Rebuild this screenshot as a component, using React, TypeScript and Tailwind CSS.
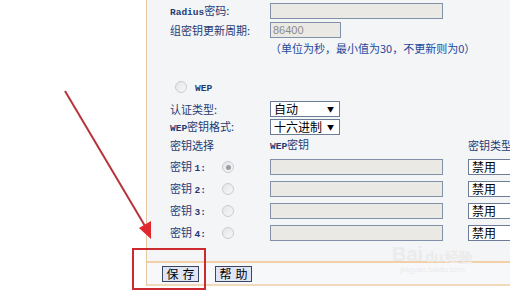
import React from 'react';

const LABEL = 'text-[11px] leading-none text-[#1f3b74]';
const FONT = { fontFamily: '"Noto Sans CJK SC", "Liberation Sans", sans-serif' };

function Latin({ children }: { children: React.ReactNode }) {
  return <span className="font-['Liberation_Mono'] text-[9.5px] font-bold">{children}</span>;
}

function Radio({ checked = false }: { checked?: boolean }) {
  return (
    <span className="flex h-[12px] w-[12px] items-center justify-center rounded-full border border-[#c9ccd1] bg-gradient-to-br from-[#e3e5e8] to-[#f7f8f9]">
      {checked && <span className="h-[5px] w-[5px] rounded-full bg-[#9a9ea4]" />}
    </span>
  );
}

function TextBox({ width, value }: { width: string; value?: string }) {
  return (
    <div
      className={`flex h-[16px] items-center border border-[#8391a8] bg-[#ebe9e4] pl-[2px] font-['Liberation_Sans'] text-[11px] text-[#8c8c8c] ${width}`}
    >
      {value}
    </div>
  );
}

function Select({ text, arrow = true }: { text: string; arrow?: boolean }) {
  return (
    <div className="flex h-[16px] w-[70px] shrink-0 items-center justify-between border border-[#6d7c96] bg-white pl-[3px] pr-[5px] text-[12px] leading-none text-black">
      <span>{text}</span>
      {arrow && <span className="text-[7px]">▼</span>}
    </div>
  );
}

function Row({ label, children, className = '' }: { label: React.ReactNode; children?: React.ReactNode; className?: string }) {
  return (
    <div className={`flex h-[16px] items-center ${className}`}>
      <div className={`w-[100px] shrink-0 ${LABEL}`}>{label}</div>
      {children}
    </div>
  );
}

function KeyRow({ n, checked, className }: { n: number; checked?: boolean; className: string }) {
  return (
    <div className={`flex h-[16px] items-center ${className}`}>
      <div className={`w-[52px] shrink-0 ${LABEL}`}>
        密钥 <Latin>{n}:</Latin>
      </div>
      <div className="w-[48px] shrink-0">
        <Radio checked={checked} />
      </div>
      <TextBox width="w-[173px] shrink-0" />
      <div className="ml-[25px]">
        <Select text="禁用" arrow={false} />
      </div>
    </div>
  );
}

export default function App() {
  return (
    <div className="relative h-[295px] w-[510px] overflow-hidden bg-white" style={FONT}>
      <div className="flex h-[286px]">
        <div className="w-[146px] shrink-0 bg-white" />
        <div className="flex min-w-0 flex-1 flex-col border-l border-[#e5c8a2] bg-[#f4f5f7]">
          <div className="flex h-[261px] flex-col pl-[23px]">
            <Row label={<><Latin>Radius</Latin>密码:</>} className="mt-[3px]">
              <TextBox width="w-[173px]" />
            </Row>
            <Row label="组密钥更新周期:" className="mt-[3px]">
              <TextBox width="w-[71px]" value="86400" />
            </Row>
            <div className="mt-[2px] flex h-[16px] items-center pl-[100px] text-[11px] text-[#24479c]">
              （单位为秒，最小值为30，不更新则为0）
            </div>
            <div className="mt-[24px] flex h-[14px] items-center gap-[8px] pl-[5px]">
              <Radio />
              <span className={LABEL}>
                <Latin>WEP</Latin>
              </span>
            </div>
            <Row label="认证类型:" className="mt-[7px]">
              <Select text="自动" />
            </Row>
            <Row label={<><Latin>WEP</Latin>密钥格式:</>} className="mt-[2px]">
              <Select text="十六进制" />
            </Row>
            <div className={`mt-[3px] flex h-[14px] items-center ${LABEL}`}>
              <span className="w-[100px] shrink-0">密钥选择</span>
              <span className="w-[198px] shrink-0">
                <Latin>WEP</Latin>密钥
              </span>
              <span className="whitespace-nowrap">密钥类型</span>
            </div>
            <KeyRow n={1} checked className="mt-[7px]" />
            <KeyRow n={2} className="mt-[6px]" />
            <KeyRow n={3} className="mt-[6px]" />
            <KeyRow n={4} className="mt-[6px]" />
          </div>
          <div className="flex flex-1 items-center gap-[16px] border-y-2 border-t-[#f2cfa6] border-b-[#f3d9bb] bg-[#f7f8fa] pl-[15px]">
            <button className="flex h-[16px] w-[37px] items-center justify-center gap-[4px] border border-[#3c4660] bg-[#dfe5f5] text-[12px] text-black">
              <span>保</span>
              <span>存</span>
            </button>
            <button className="flex h-[16px] w-[37px] items-center justify-center gap-[4px] border border-[#3c4660] bg-[#dfe5f5] text-[12px] text-black">
              <span>帮</span>
              <span>助</span>
            </button>
          </div>
        </div>
      </div>

      {/* baidu watermark */}
      <div className="pointer-events-none absolute left-[392px] top-[244px] flex flex-col items-center leading-none text-[#ebebeb]">
        <div className="flex items-end gap-[2px] font-['Liberation_Sans'] text-[20px] font-bold">
          <span>Bai</span>
          <span className="text-[15px]">du</span>
          <span className="text-[14px]">经验</span>
        </div>
        <span className="mt-[2px] font-['Liberation_Sans'] text-[8px]">jingyan.baidu.com</span>
      </div>

      {/* red annotation */}
      <svg className="pointer-events-none absolute left-0 top-0" width="510" height="295">
        <line x1="65" y1="91" x2="145" y2="226" stroke="#b8323c" strokeWidth="2" />
        <polygon points="151,239 139,228 151,221" fill="#e0262e" />
        <rect x="133" y="249" width="72" height="40" fill="none" stroke="#cc2a2e" strokeWidth="2" />
      </svg>
    </div>
  );
}
